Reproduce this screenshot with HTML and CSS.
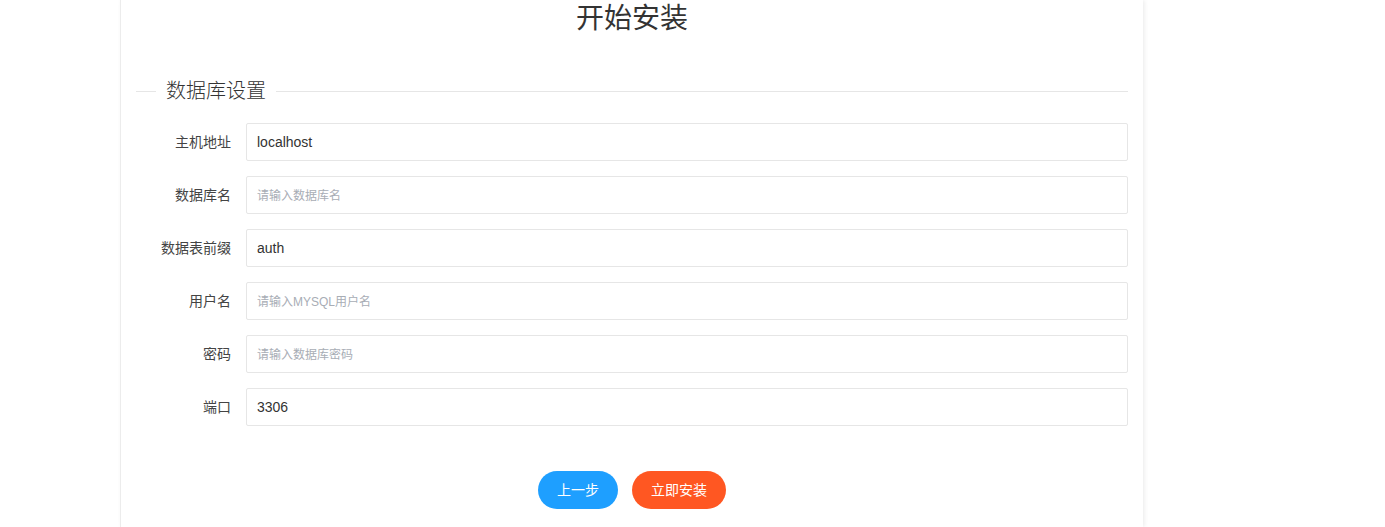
FILE: index.html
```html
<!DOCTYPE html>
<html lang="zh-CN">
<head>
<meta charset="utf-8">
<title>开始安装</title>
<link rel="stylesheet" href="styles.css">
</head>
<body>
<div class="card">
  <h2 class="title">开始安装</h2>
  <fieldset class="field-title">
    <legend>数据库设置</legend>
  </fieldset>
  <form class="form">
    <div class="form-item">
      <label class="form-label">主机地址</label>
      <div class="input-block"><input class="input" type="text" value="localhost"></div>
    </div>
    <div class="form-item">
      <label class="form-label">数据库名</label>
      <div class="input-block"><input class="input" type="text" placeholder="请输入数据库名"></div>
    </div>
    <div class="form-item">
      <label class="form-label">数据表前缀</label>
      <div class="input-block"><input class="input" type="text" value="auth"></div>
    </div>
    <div class="form-item">
      <label class="form-label">用户名</label>
      <div class="input-block"><input class="input" type="text" placeholder="请输入MYSQL用户名"></div>
    </div>
    <div class="form-item">
      <label class="form-label">密码</label>
      <div class="input-block"><input class="input" type="text" placeholder="请输入数据库密码"></div>
    </div>
    <div class="form-item">
      <label class="form-label">端口</label>
      <div class="input-block"><input class="input" type="text" value="3306"></div>
    </div>
    <div class="actions">
      <button type="button" class="btn btn-blue">上一步</button>
      <button type="button" class="btn btn-orange">立即安装</button>
    </div>
  </form>
</div>
</body>
</html>
```
FILE: styles.css
```css
html, body {
  margin: 0;
  padding: 0;
  background: #fff;
}
body {
  font-family: "Liberation Sans", "Noto Sans CJK SC", sans-serif;
  font-size: 14px;
  color: #333;
}
.card {
  margin-left: 121px;
  width: 1022px;
  min-height: 527px;
  box-sizing: border-box;
  padding: 0 15px;
  background: #fff;
  box-shadow: -1px 0 0 #ececec, 1px 0 5px rgba(0, 0, 0, 0.09);
}
.title {
  margin: 0;
  height: 38px;
  line-height: 38px;
  text-align: center;
  font-size: 28px;
  font-weight: 400;
  color: #333;
}
.field-title {
  margin: 40px 0 19px;
  padding: 0;
  border: none;
  border-top: 1px solid #e6e6e6;
  min-width: 0;
}
.field-title legend {
  margin-left: 20px;
  padding: 0 10px;
  font-size: 20px;
  line-height: 26px;
  font-weight: 300;
  color: #333;
}
.form-item {
  display: flex;
  margin-bottom: 15px;
}
.form-label {
  width: 80px;
  flex: none;
  padding: 9px 15px;
  line-height: 20px;
  text-align: right;
  color: #444;
  font-size: 14px;
  white-space: nowrap;
}
.input-block {
  flex: 1;
}
.input {
  display: block;
  width: 100%;
  height: 38px;
  box-sizing: border-box;
  border: 1px solid #e6e6e6;
  border-radius: 2px;
  padding: 0 10px;
  font-family: "Liberation Sans", "Noto Sans CJK SC", sans-serif;
  font-size: 14px;
  color: #333;
  background: #fff;
  outline: none;
}
.input::placeholder {
  color: #a8adb5;
  font-size: 12px;
}
.actions {
  display: flex;
  justify-content: center;
  gap: 14px;
  padding-top: 30px;
}
.btn {
  height: 38px;
  line-height: 38px;
  padding: 0 18px;
  border: none;
  border-radius: 19px;
  color: #fff;
  font-family: "Liberation Sans", "Noto Sans CJK SC", sans-serif;
  font-size: 14px;
  cursor: pointer;
}
.btn-blue {
  background: #1e9fff;
  min-width: 80px;
}
.btn-orange {
  background: #ff5722;
  min-width: 94px;
}
```
